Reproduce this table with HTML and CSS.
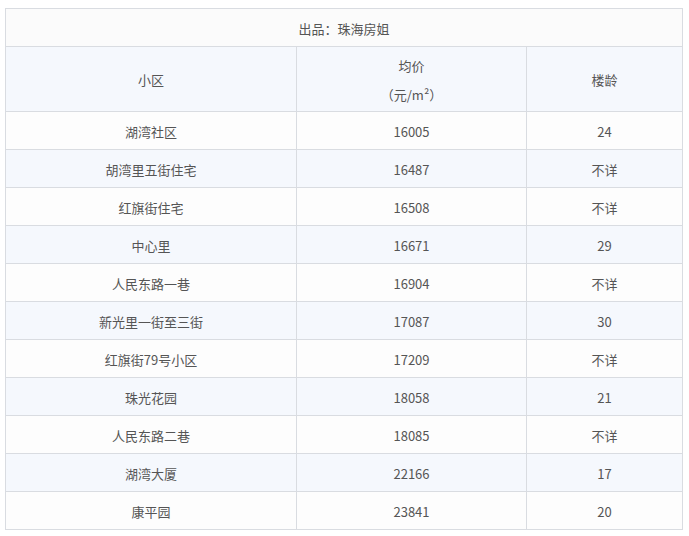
FILE: index.html
```html
<!DOCTYPE html>
<html lang="zh">
<head>
<meta charset="utf-8">
<link rel="stylesheet" href="styles.css">
</head>
<body>
<table class="tbl">
  <colgroup>
    <col class="c1"><col class="c2"><col class="c3">
  </colgroup>
  <tr class="title"><td colspan="3">出品：珠海房姐</td></tr>
  <tr class="head">
    <td>小区</td>
    <td><p class="l1">均价</p><p class="l2">（元/m²）</p></td>
    <td>楼龄</td>
  </tr>
  <tr><td>湖湾社区</td><td>16005</td><td>24</td></tr>
  <tr class="alt"><td>胡湾里五街住宅</td><td>16487</td><td>不详</td></tr>
  <tr><td>红旗街住宅</td><td>16508</td><td>不详</td></tr>
  <tr class="alt"><td>中心里</td><td>16671</td><td>29</td></tr>
  <tr><td>人民东路一巷</td><td>16904</td><td>不详</td></tr>
  <tr class="alt"><td>新光里一街至三街</td><td>17087</td><td>30</td></tr>
  <tr><td>红旗街79号小区</td><td>17209</td><td>不详</td></tr>
  <tr class="alt"><td>珠光花园</td><td>18058</td><td>21</td></tr>
  <tr><td>人民东路二巷</td><td>18085</td><td>不详</td></tr>
  <tr class="alt"><td>湖湾大厦</td><td>22166</td><td>17</td></tr>
  <tr><td>康平园</td><td>23841</td><td>20</td></tr>
</table>
</body>
</html>
```
FILE: styles.css
```css
html, body { margin: 0; padding: 0; background: #fff; }
body { padding: 8px 0 0 5px; font-family: "Noto Sans CJK SC", "Microsoft YaHei", sans-serif; color: #555; font-size: 13px; }
.tbl { border-collapse: collapse; width: 677px; table-layout: fixed; }
.c1 { width: 291px; }
.c2 { width: 230px; }
.c3 { width: 156px; }
.tbl td { border: 1px solid #d9dce1; text-align: center; vertical-align: middle; height: 35px; padding: 2px 0 0; line-height: 20px; background: #fdfdfd; }
.tbl tr.alt td, .tbl tr.head td { background: #f5f8fd; }
.tbl tr.title td { background: #fbfbfb; }
.tbl tr.head td { height: 62px; }
.l1, .l2 { margin: 0; line-height: 20px; }
.l1 { margin-bottom: 9px; }
```
